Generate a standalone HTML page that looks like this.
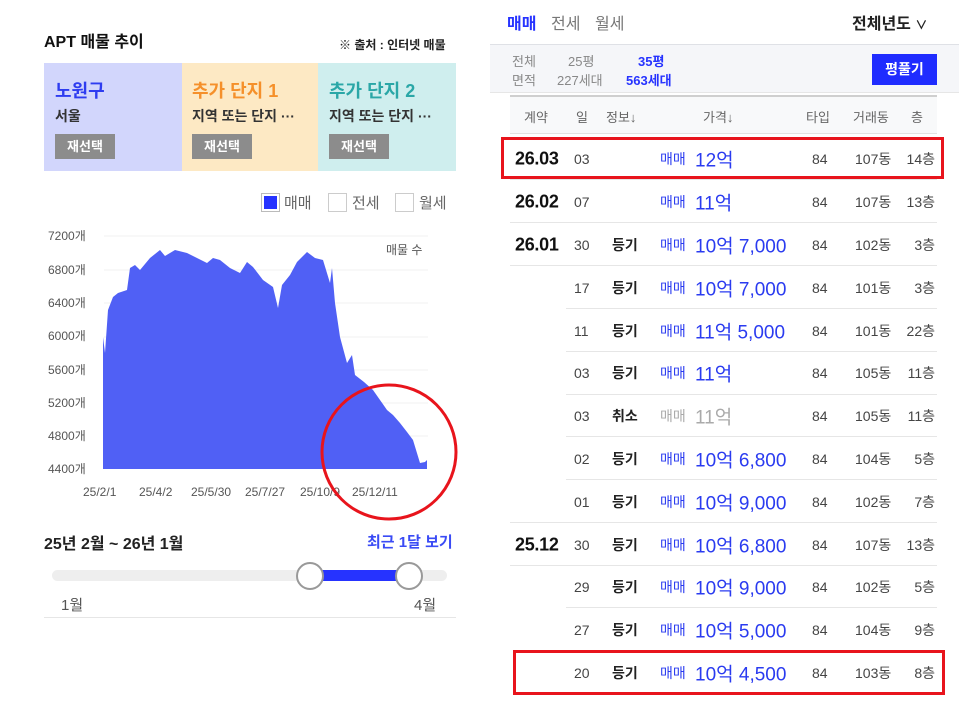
<!DOCTYPE html>
<html><head><meta charset="utf-8"><style>
*{margin:0;padding:0;box-sizing:border-box}
body{width:959px;height:715px;background:#fff;font-family:"Liberation Sans","Noto Sans CJK KR",sans-serif;position:relative;overflow:hidden;color:#222}
.a{position:absolute;white-space:nowrap}
.row{position:absolute;left:0;width:959px;height:43px}
.row span{position:absolute;top:50%;transform:translateY(-50%);white-space:nowrap}
.m{left:515px;font-size:18px;color:#111;font-weight:bold;letter-spacing:-0.3px}
.d{left:574px;font-size:14px;color:#444}
.i{left:612px;font-size:14px;font-weight:bold;color:#222}
.t{left:660px;font-size:14px;color:#2a3bf0}
.p{left:695px;font-size:19px;color:#2a3bf0}
.ty{left:812px;font-size:14px;color:#444}
.dg{left:855px;font-size:14px;color:#444}
.f{right:24px;font-size:14px;color:#444}
.ln{position:absolute;height:1px;background:#e6e6e6}
</style></head><body>
<div class="a" style="left:44px;top:28px;font-size:16px;font-weight:bold;color:#111">APT 매물 추이</div>
<div class="a" style="left:339px;top:36px;font-size:12px;font-weight:bold;color:#222">※ 출처 : 인터넷 매물</div>
<div class="a" style="left:44px;top:63px;width:138px;height:108px;background:#d2d6fc"></div>
<div class="a" style="left:182px;top:63px;width:136px;height:108px;background:#fde9c4"></div>
<div class="a" style="left:318px;top:63px;width:138px;height:108px;background:#cfeeee"></div>
<div class="a" style="left:55px;top:77px;font-size:18px;color:#2e3cf0;font-weight:bold">노원구</div>
<div class="a" style="left:192px;top:77px;font-size:18px;color:#f5902a;font-weight:bold">추가 단지 1</div>
<div class="a" style="left:329px;top:77px;font-size:18px;color:#2aa7a7;font-weight:bold">추가 단지 2</div>
<div class="a" style="left:55px;top:106px;font-size:14px;font-weight:bold;color:#333">서울</div>
<div class="a" style="left:192px;top:106px;font-size:14px;font-weight:bold;color:#333">지역 또는 단지 ···</div>
<div class="a" style="left:329px;top:106px;font-size:14px;font-weight:bold;color:#333">지역 또는 단지 ···</div>
<div class="a" style="left:55px;top:134px;width:60px;height:25px;background:#8c8c8c;color:#fff;font-size:13px;font-weight:bold;text-align:center;line-height:25px">재선택</div>
<div class="a" style="left:192px;top:134px;width:60px;height:25px;background:#8c8c8c;color:#fff;font-size:13px;font-weight:bold;text-align:center;line-height:25px">재선택</div>
<div class="a" style="left:329px;top:134px;width:60px;height:25px;background:#8c8c8c;color:#fff;font-size:13px;font-weight:bold;text-align:center;line-height:25px">재선택</div>
<div class="a" style="left:261px;top:193px;width:19px;height:19px;border:1px solid #bbb;background:#fff"><div style="margin:2px;width:13px;height:13px;background:#2633ff"></div></div>
<div class="a" style="left:284px;top:192px;font-size:15px;color:#666">매매</div>
<div class="a" style="left:328px;top:193px;width:19px;height:19px;border:1px solid #ccc"></div>
<div class="a" style="left:352px;top:192px;font-size:15px;color:#666">전세</div>
<div class="a" style="left:395px;top:193px;width:19px;height:19px;border:1px solid #ccc"></div>
<div class="a" style="left:419px;top:192px;font-size:15px;color:#666">월세</div>
<svg class="a" style="left:0;top:0" width="480" height="530">
<g stroke="#f0f0f0" stroke-width="1">
<line x1="104" y1="236" x2="428" y2="236"/><line x1="104" y1="270" x2="428" y2="270"/><line x1="104" y1="303" x2="428" y2="303"/><line x1="104" y1="337" x2="428" y2="337"/><line x1="104" y1="370" x2="428" y2="370"/><line x1="104" y1="403" x2="428" y2="403"/><line x1="104" y1="436" x2="428" y2="436"/>
</g>
<polygon fill="#5060f5" points="103,469 103,337 105,353 108,310 113,297 118,293 127,290 130,268 135,265 140,270 150,258 160,250 165,256 175,250 187,253 197,258 207,263 213,258 220,260 230,268 240,273 247,262 253,267 263,280 273,287 278,308 282,285 290,275 297,262 307,252 315,258 323,260 330,283 332,268 335,303 340,337 347,363 352,355 355,375 364,382 373,390 380,400 387,410 393,415 400,423 407,432 413,440 420,463 425,462 427,460 427,469"/>
<g font-size="12" fill="#555" font-family="Liberation Sans,Noto Sans CJK KR,sans-serif">
<text x="48" y="240">7200개</text><text x="48" y="274">6800개</text><text x="48" y="307">6400개</text><text x="48" y="340">6000개</text><text x="48" y="374">5600개</text><text x="48" y="407">5200개</text><text x="48" y="440">4800개</text><text x="48" y="473">4400개</text>
<text x="386" y="254">매물 수</text>
<text x="83" y="496">25/2/1</text><text x="139" y="496">25/4/2</text><text x="191" y="496">25/5/30</text><text x="245" y="496">25/7/27</text><text x="300" y="496">25/10/9</text><text x="352" y="496">25/12/11</text>
</g>
<ellipse cx="389" cy="452" rx="67" ry="67" fill="none" stroke="#e8141c" stroke-width="3"/>
</svg>
<div class="a" style="left:44px;top:530px;font-size:16px;font-weight:bold;color:#222">25년 2월 ~ 26년 1월</div>
<div class="a" style="left:367px;top:531px;font-size:15px;font-weight:bold;color:#3a4bf5">최근 1달 보기</div>
<div class="a" style="left:52px;top:570px;width:395px;height:11px;border-radius:6px;background:#eee"></div>
<div class="a" style="left:310px;top:570px;width:100px;height:11px;background:#2633ff"></div>
<div class="a" style="left:296px;top:562px;width:28px;height:28px;border-radius:50%;background:#fff;border:2px solid #999"></div>
<div class="a" style="left:395px;top:562px;width:28px;height:28px;border-radius:50%;background:#fff;border:2px solid #999"></div>
<div class="a" style="left:61px;top:594px;font-size:15px;color:#555">1월</div>
<div class="a" style="left:414px;top:594px;font-size:15px;color:#555">4월</div>
<div class="a" style="left:44px;top:617px;width:412px;height:1px;background:#e6e6e6"></div>

<div class="a" style="left:507px;top:10px;font-size:16px;font-weight:bold;color:#2633ff">매매</div>
<div class="a" style="left:551px;top:10px;font-size:16px;color:#777">전세</div>
<div class="a" style="left:595px;top:10px;font-size:16px;color:#777">월세</div>
<div class="a" style="left:852px;top:10px;font-size:16px;font-weight:bold;color:#222">전체년도 <span style="font-size:12px">∨</span></div>
<div class="a" style="left:490px;top:44px;width:469px;height:49px;background:#f5f6f9;border-top:1px solid #dfe1e6;border-bottom:1px solid #e6e6e6"></div>
<div class="a" style="left:512px;top:51px;font-size:13px;color:#888">전체</div>
<div class="a" style="left:512px;top:70px;font-size:13px;color:#888">면적</div>
<div class="a" style="left:568px;top:51px;font-size:13px;color:#888">25평</div>
<div class="a" style="left:557px;top:70px;font-size:13px;color:#888">227세대</div>
<div class="a" style="left:638px;top:51px;font-size:13px;font-weight:bold;color:#2633ff">35평</div>
<div class="a" style="left:626px;top:70px;font-size:13px;font-weight:bold;color:#2633ff">563세대</div>
<div class="a" style="left:872px;top:54px;width:65px;height:31px;background:#1f2cff;color:#fff;font-size:14px;font-weight:bold;text-align:center;line-height:31px">평풀기</div>
<div class="a" style="left:510px;top:95px;width:427px;height:39px;background:#f8f9fa;border-top:2px solid #cfcfcf;border-bottom:1px solid #e2e2e2"></div>
<div class="a" style="left:524px;top:107px;font-size:13px;color:#666">계약</div>
<div class="a" style="left:576px;top:107px;font-size:13px;color:#666">일</div>
<div class="a" style="left:606px;top:107px;font-size:13px;color:#666">정보↓</div>
<div class="a" style="left:703px;top:107px;font-size:13px;color:#666">가격↓</div>
<div class="a" style="left:806px;top:107px;font-size:13px;color:#666">타입</div>
<div class="a" style="left:853px;top:107px;font-size:13px;color:#666">거래동</div>
<div class="a" style="left:911px;top:107px;font-size:13px;color:#666">층</div>

<div class="row" style="top:137px"><span class="m">26.03</span><span class="d">03</span><span class="t">매매</span><span class="p">12억</span><span class="ty">84</span><span class="dg">107동</span><span class="f">14층</span></div>
<div class="ln" style="left:510px;top:179px;width:427px"></div>
<div class="row" style="top:180px"><span class="m">26.02</span><span class="d">07</span><span class="t">매매</span><span class="p">11억</span><span class="ty">84</span><span class="dg">107동</span><span class="f">13층</span></div>
<div class="ln" style="left:510px;top:222px;width:427px"></div>
<div class="row" style="top:223px"><span class="m">26.01</span><span class="d">30</span><span class="i">등기</span><span class="t">매매</span><span class="p">10억 7,000</span><span class="ty">84</span><span class="dg">102동</span><span class="f">3층</span></div>
<div class="ln" style="left:510px;top:265px;width:427px"></div>
<div class="row" style="top:266px"><span class="d">17</span><span class="i">등기</span><span class="t">매매</span><span class="p">10억 7,000</span><span class="ty">84</span><span class="dg">101동</span><span class="f">3층</span></div>
<div class="ln" style="left:566px;top:308px;width:371px"></div>
<div class="row" style="top:309px"><span class="d">11</span><span class="i">등기</span><span class="t">매매</span><span class="p">11억 5,000</span><span class="ty">84</span><span class="dg">101동</span><span class="f">22층</span></div>
<div class="ln" style="left:566px;top:351px;width:371px"></div>
<div class="row" style="top:351px"><span class="d">03</span><span class="i">등기</span><span class="t">매매</span><span class="p">11억</span><span class="ty">84</span><span class="dg">105동</span><span class="f">11층</span></div>
<div class="ln" style="left:566px;top:394px;width:371px"></div>
<div class="row" style="top:394px"><span class="d">03</span><span class="i">취소</span><span class="t" style="color:#aaa">매매</span><span class="p" style="color:#aaa">11억</span><span class="ty">84</span><span class="dg">105동</span><span class="f">11층</span></div>
<div class="ln" style="left:566px;top:436px;width:371px"></div>
<div class="row" style="top:437px"><span class="d">02</span><span class="i">등기</span><span class="t">매매</span><span class="p">10억 6,800</span><span class="ty">84</span><span class="dg">104동</span><span class="f">5층</span></div>
<div class="ln" style="left:566px;top:479px;width:371px"></div>
<div class="row" style="top:480px"><span class="d">01</span><span class="i">등기</span><span class="t">매매</span><span class="p">10억 9,000</span><span class="ty">84</span><span class="dg">102동</span><span class="f">7층</span></div>
<div class="ln" style="left:510px;top:522px;width:427px"></div>
<div class="row" style="top:523px"><span class="m">25.12</span><span class="d">30</span><span class="i">등기</span><span class="t">매매</span><span class="p">10억 6,800</span><span class="ty">84</span><span class="dg">107동</span><span class="f">13층</span></div>
<div class="ln" style="left:510px;top:565px;width:427px"></div>
<div class="row" style="top:565px"><span class="d">29</span><span class="i">등기</span><span class="t">매매</span><span class="p">10억 9,000</span><span class="ty">84</span><span class="dg">102동</span><span class="f">5층</span></div>
<div class="ln" style="left:566px;top:607px;width:371px"></div>
<div class="row" style="top:608px"><span class="d">27</span><span class="i">등기</span><span class="t">매매</span><span class="p">10억 5,000</span><span class="ty">84</span><span class="dg">104동</span><span class="f">9층</span></div>
<div class="row" style="top:651px"><span class="d">20</span><span class="i">등기</span><span class="t">매매</span><span class="p">10억 4,500</span><span class="ty">84</span><span class="dg">103동</span><span class="f">8층</span></div>

<div class="a" style="left:501px;top:137px;width:443px;height:42px;border:3px solid #e8141c"></div>
<div class="a" style="left:513px;top:650px;width:432px;height:45px;border:3px solid #e8141c"></div>
</body></html>
